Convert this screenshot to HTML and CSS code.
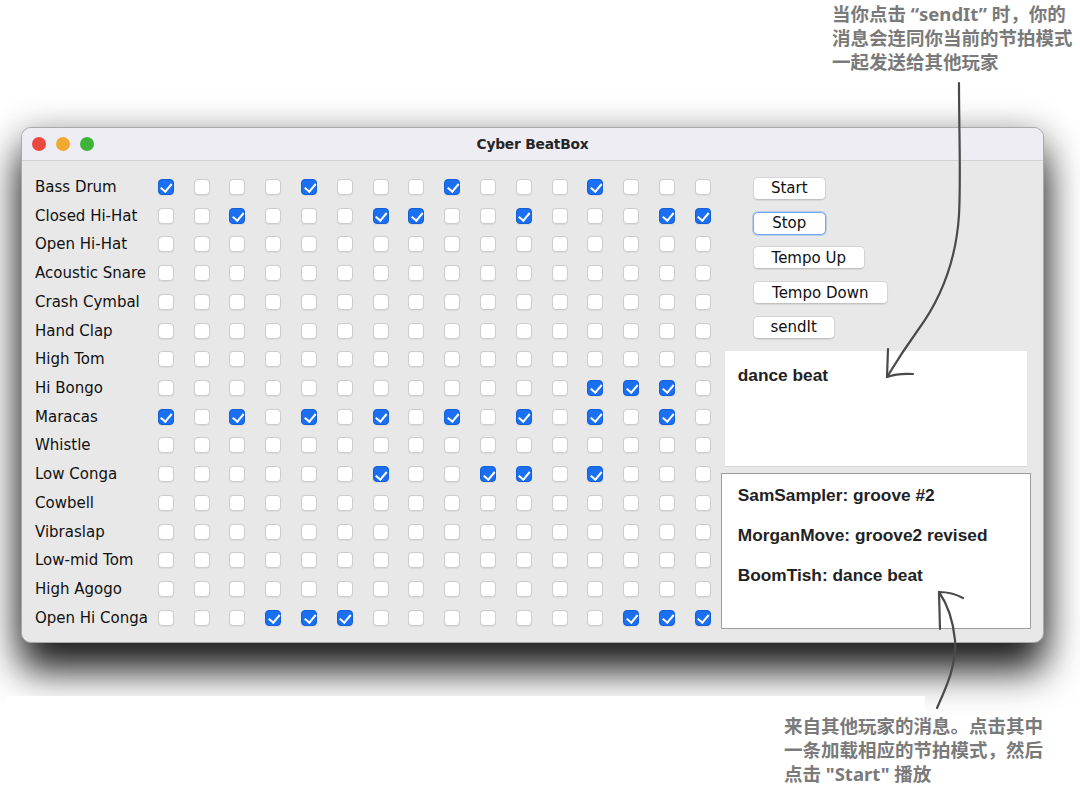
FILE: index.html
```html
<!DOCTYPE html>
<html lang="zh">
<head>
<meta charset="utf-8">
<title>Cyber BeatBox</title>
<link rel="stylesheet" href="styles.css">
</head>
<body>
<div class="page">
  <p class="note note-top">当你点击 “sendIt” 时，你的<br>消息会连同你当前的节拍模式<br>一起发送给其他玩家</p>

  <div class="window">
    <div class="titlebar">
      <div class="lights"><span class="light red"></span><span class="light yellow"></span><span class="light green"></span></div>
      <div class="title">Cyber BeatBox</div>
      <div></div>
    </div>
    <div class="content">
      <div class="grid">
        <span class="label">Bass Drum</span>
        <i class="cb on"></i><i class="cb"></i><i class="cb"></i><i class="cb"></i><i class="cb on"></i><i class="cb"></i><i class="cb"></i><i class="cb"></i><i class="cb on"></i><i class="cb"></i><i class="cb"></i><i class="cb"></i><i class="cb on"></i><i class="cb"></i><i class="cb"></i><i class="cb"></i>
        <span class="label">Closed Hi-Hat</span>
        <i class="cb"></i><i class="cb"></i><i class="cb on"></i><i class="cb"></i><i class="cb"></i><i class="cb"></i><i class="cb on"></i><i class="cb on"></i><i class="cb"></i><i class="cb"></i><i class="cb on"></i><i class="cb"></i><i class="cb"></i><i class="cb"></i><i class="cb on"></i><i class="cb on"></i>
        <span class="label">Open Hi-Hat</span>
        <i class="cb"></i><i class="cb"></i><i class="cb"></i><i class="cb"></i><i class="cb"></i><i class="cb"></i><i class="cb"></i><i class="cb"></i><i class="cb"></i><i class="cb"></i><i class="cb"></i><i class="cb"></i><i class="cb"></i><i class="cb"></i><i class="cb"></i><i class="cb"></i>
        <span class="label">Acoustic Snare</span>
        <i class="cb"></i><i class="cb"></i><i class="cb"></i><i class="cb"></i><i class="cb"></i><i class="cb"></i><i class="cb"></i><i class="cb"></i><i class="cb"></i><i class="cb"></i><i class="cb"></i><i class="cb"></i><i class="cb"></i><i class="cb"></i><i class="cb"></i><i class="cb"></i>
        <span class="label">Crash Cymbal</span>
        <i class="cb"></i><i class="cb"></i><i class="cb"></i><i class="cb"></i><i class="cb"></i><i class="cb"></i><i class="cb"></i><i class="cb"></i><i class="cb"></i><i class="cb"></i><i class="cb"></i><i class="cb"></i><i class="cb"></i><i class="cb"></i><i class="cb"></i><i class="cb"></i>
        <span class="label">Hand Clap</span>
        <i class="cb"></i><i class="cb"></i><i class="cb"></i><i class="cb"></i><i class="cb"></i><i class="cb"></i><i class="cb"></i><i class="cb"></i><i class="cb"></i><i class="cb"></i><i class="cb"></i><i class="cb"></i><i class="cb"></i><i class="cb"></i><i class="cb"></i><i class="cb"></i>
        <span class="label">High Tom</span>
        <i class="cb"></i><i class="cb"></i><i class="cb"></i><i class="cb"></i><i class="cb"></i><i class="cb"></i><i class="cb"></i><i class="cb"></i><i class="cb"></i><i class="cb"></i><i class="cb"></i><i class="cb"></i><i class="cb"></i><i class="cb"></i><i class="cb"></i><i class="cb"></i>
        <span class="label">Hi Bongo</span>
        <i class="cb"></i><i class="cb"></i><i class="cb"></i><i class="cb"></i><i class="cb"></i><i class="cb"></i><i class="cb"></i><i class="cb"></i><i class="cb"></i><i class="cb"></i><i class="cb"></i><i class="cb"></i><i class="cb on"></i><i class="cb on"></i><i class="cb on"></i><i class="cb"></i>
        <span class="label">Maracas</span>
        <i class="cb on"></i><i class="cb"></i><i class="cb on"></i><i class="cb"></i><i class="cb on"></i><i class="cb"></i><i class="cb on"></i><i class="cb"></i><i class="cb on"></i><i class="cb"></i><i class="cb on"></i><i class="cb"></i><i class="cb on"></i><i class="cb"></i><i class="cb on"></i><i class="cb"></i>
        <span class="label">Whistle</span>
        <i class="cb"></i><i class="cb"></i><i class="cb"></i><i class="cb"></i><i class="cb"></i><i class="cb"></i><i class="cb"></i><i class="cb"></i><i class="cb"></i><i class="cb"></i><i class="cb"></i><i class="cb"></i><i class="cb"></i><i class="cb"></i><i class="cb"></i><i class="cb"></i>
        <span class="label">Low Conga</span>
        <i class="cb"></i><i class="cb"></i><i class="cb"></i><i class="cb"></i><i class="cb"></i><i class="cb"></i><i class="cb on"></i><i class="cb"></i><i class="cb"></i><i class="cb on"></i><i class="cb on"></i><i class="cb"></i><i class="cb on"></i><i class="cb"></i><i class="cb"></i><i class="cb"></i>
        <span class="label">Cowbell</span>
        <i class="cb"></i><i class="cb"></i><i class="cb"></i><i class="cb"></i><i class="cb"></i><i class="cb"></i><i class="cb"></i><i class="cb"></i><i class="cb"></i><i class="cb"></i><i class="cb"></i><i class="cb"></i><i class="cb"></i><i class="cb"></i><i class="cb"></i><i class="cb"></i>
        <span class="label">Vibraslap</span>
        <i class="cb"></i><i class="cb"></i><i class="cb"></i><i class="cb"></i><i class="cb"></i><i class="cb"></i><i class="cb"></i><i class="cb"></i><i class="cb"></i><i class="cb"></i><i class="cb"></i><i class="cb"></i><i class="cb"></i><i class="cb"></i><i class="cb"></i><i class="cb"></i>
        <span class="label">Low-mid Tom</span>
        <i class="cb"></i><i class="cb"></i><i class="cb"></i><i class="cb"></i><i class="cb"></i><i class="cb"></i><i class="cb"></i><i class="cb"></i><i class="cb"></i><i class="cb"></i><i class="cb"></i><i class="cb"></i><i class="cb"></i><i class="cb"></i><i class="cb"></i><i class="cb"></i>
        <span class="label">High Agogo</span>
        <i class="cb"></i><i class="cb"></i><i class="cb"></i><i class="cb"></i><i class="cb"></i><i class="cb"></i><i class="cb"></i><i class="cb"></i><i class="cb"></i><i class="cb"></i><i class="cb"></i><i class="cb"></i><i class="cb"></i><i class="cb"></i><i class="cb"></i><i class="cb"></i>
        <span class="label">Open Hi Conga</span>
        <i class="cb"></i><i class="cb"></i><i class="cb"></i><i class="cb on"></i><i class="cb on"></i><i class="cb on"></i><i class="cb"></i><i class="cb"></i><i class="cb"></i><i class="cb"></i><i class="cb"></i><i class="cb"></i><i class="cb"></i><i class="cb on"></i><i class="cb on"></i><i class="cb on"></i>
      </div>

      <div class="side">
        <div class="buttons">
          <button class="btn btn-start">Start</button>
          <button class="btn btn-stop focus">Stop</button>
          <button class="btn btn-up">Tempo Up</button>
          <button class="btn btn-down">Tempo Down</button>
          <button class="btn btn-send">sendIt</button>
        </div>
        <div class="textarea">dance beat</div>
        <ul class="list">
          <li>SamSampler: groove #2</li>
          <li>MorganMove: groove2 revised</li>
          <li>BoomTish: dance beat</li>
        </ul>
      </div>
    </div>
  </div>

  <div class="bottom">
    <p class="note note-bottom">来自其他玩家的消息。点击其中<br>一条加载相应的节拍模式，然后<br>点击 "Start" 播放</p>
  </div>

  <svg class="arrows" width="1080" height="792" viewBox="0 0 1080 792" aria-hidden="true">
    <g fill="none" stroke="#4a4a4a" stroke-width="2.2" stroke-linecap="round" stroke-linejoin="round">
      <path d="M959 83 C959 130 961 180 959 215 C956 262 940 300 918 330 C905 348 896 362 887 377"/>
      <path d="M888 349 L887 377 Q898 373 913 374"/>
      <path d="M939 592 C948 605 953 620 955 640 C957 665 945 690 937 708"/>
      <path d="M940 629 L939 592 Q952 592 963 598"/>
    </g>
  </svg>
</div>
</body>
</html>
```

FILE: styles.css
```css
* { box-sizing: border-box; }

html, body {
  margin: 0;
  padding: 0;
  background: #ffffff;
}

.page {
  position: relative;
  width: 1080px;
  height: 792px;
  overflow: hidden;
  background: #ffffff;
}

.note {
  margin: 0;
  font-family: "Noto Sans", "Noto Sans CJK SC", sans-serif;
  font-weight: 700;
  font-size: 18.5px;
  line-height: 24px;
  color: #7a7a7a;
  white-space: nowrap;
}

.note-top {
  padding: 2px 0 0 832px;
  height: 74px;
}

/* window */
.window {
  position: relative;
  margin: 53px 0 0 21px;
  width: 1023px;
  height: 516px;
  border: 1px solid #a9a9ab;
  border-radius: 10px;
  overflow: hidden;
  background: #e8e8e8;
  box-shadow: 0 28px 38px rgba(0, 0, 0, 0.85), 0 4px 36px rgba(0, 0, 0, 0.32);
}

.titlebar {
  height: 33px;
  display: grid;
  grid-template-columns: 1fr auto 1fr;
  align-items: center;
  background: #efedf4;
  border-bottom: 1px solid #d3d2d7;
}

.lights {
  display: flex;
  gap: 10px;
  padding-left: 10px;
}

.light {
  width: 14px;
  height: 14px;
  border-radius: 50%;
}
.light.red { background: #e9493f; }
.light.yellow { background: #f0aa32; }
.light.green { background: #3fb23a; }

.title {
  font-family: "DejaVu Sans", sans-serif;
  font-weight: 700;
  font-size: 13.8px;
  color: #262626;
  letter-spacing: -0.2px;
}

.content {
  display: flex;
  height: 481px;
  padding: 11.6px 0 0 13px;
}

/* beat grid */
.grid {
  display: grid;
  grid-template-columns: 113px repeat(16, 35.8px);
  grid-auto-rows: 28.73px;
  align-items: center;
}

.label {
  font-family: "DejaVu Sans", sans-serif;
  font-size: 15px;
  color: #111;
  white-space: nowrap;
}

.cb {
  position: relative;
  justify-self: center;
  width: 16px;
  height: 16px;
  border-radius: 4px;
  background: #ffffff;
  border: 1px solid #cdcdcd;
  box-shadow: 0 0.5px 1px rgba(0, 0, 0, 0.06);
}

.cb.on {
  background: #1a6ff3;
  border-color: #135fd6;
}

.cb.on::after {
  content: "";
  position: absolute;
  left: 4.5px;
  top: 1.5px;
  width: 4.5px;
  height: 8.5px;
  border-right: 2.2px solid #ffffff;
  border-bottom: 2.2px solid #ffffff;
  transform: rotate(40deg);
}

/* side panel */
.side {
  width: 310px;
  display: flex;
  flex-direction: column;
  padding-top: 4.4px;
}

.buttons {
  display: flex;
  flex-direction: column;
  align-items: flex-start;
  gap: 11.75px;
  padding-left: 32px;
}

.btn {
  height: 23px;
  padding: 0;
  font-family: "DejaVu Sans", sans-serif;
  font-size: 15px;
  color: #111;
  background: #ffffff;
  border: 1px solid #d4d4d4;
  border-bottom-color: #c2c2c2;
  border-radius: 5px;
  box-shadow: 0 1px 1px rgba(0, 0, 0, 0.08);
  text-align: center;
  line-height: 20px;
}

.btn-start, .btn-stop { width: 73px; }
.btn-up { width: 112px; }
.btn-down { width: 135px; }
.btn-send { width: 82px; }

.btn.focus {
  border: 1px solid #77a9f0;
  box-shadow: 0 0 0 1px rgba(120, 170, 240, 0.45);
}

.textarea {
  margin: 12px 0 0 4px;
  width: 302px;
  height: 116px;
  background: #ffffff;
  border-bottom: 1px solid #d6d6d6;
  padding: 12px 0 0 13px;
  font-family: "Liberation Sans", Arial, sans-serif;
  font-weight: 700;
  font-size: 17.3px;
  line-height: 24px;
  color: #222;
}

.list {
  margin: 6px 0 0 0;
  padding: 1px 0 0 16px;
  list-style: none;
  width: 310px;
  height: 156px;
  background: #ffffff;
  border: 1px solid #9c9c9c;
  font-family: "Liberation Sans", Arial, sans-serif;
  font-weight: 700;
  font-size: 17.3px;
  color: #222;
}

.list li {
  height: 40px;
  line-height: 40px;
}

/* bottom annotation */
.bottom {
  position: relative;
  z-index: 1;
  margin: 53px 0 0 6px;
  width: 919px;
  height: 96px;
  background: #ffffff;
}

.note-bottom {
  padding: 17.5px 0 0 778px;
}

.arrows {
  position: absolute;
  left: 0;
  top: 0;
  z-index: 2;
  pointer-events: none;
}
```
